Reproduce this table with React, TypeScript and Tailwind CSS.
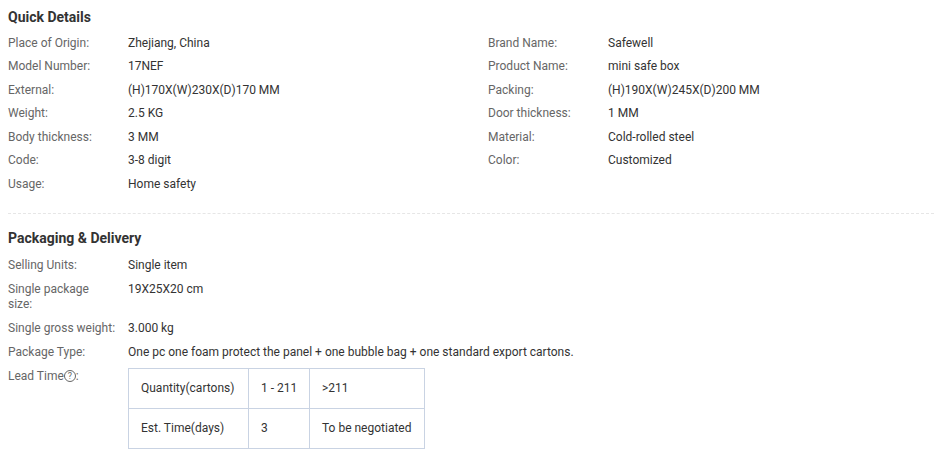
import React from "react";

const quickLeft: [string, string][] = [
  ["Place of Origin:", "Zhejiang, China"],
  ["Model Number:", "17NEF"],
  ["External:", "(H)170X(W)230X(D)170 MM"],
  ["Weight:", "2.5 KG"],
  ["Body thickness:", "3 MM"],
  ["Code:", "3-8 digit"],
  ["Usage:", "Home safety"],
];
const quickRight: [string, string][] = [
  ["Brand Name:", "Safewell"],
  ["Product Name:", "mini safe box"],
  ["Packing:", "(H)190X(W)245X(D)200 MM"],
  ["Door thickness:", "1 MM"],
  ["Material:", "Cold-rolled steel"],
  ["Color:", "Customized"],
];

function Row({ label, value }: { label: React.ReactNode; value: React.ReactNode }) {
  return (
    <div className="flex leading-[15px]">
      <div className="w-[120px] shrink-0 pr-1 text-[#666]">{label}</div>
      <div className="text-[#333]">{value}</div>
    </div>
  );
}

export default function App() {
  const grid: React.ReactNode[] = [];
  for (let i = 0; i < 7; i++) {
    const l = quickLeft[i];
    const r = quickRight[i];
    grid.push(<Row key={"l" + i} label={l[0]} value={l[1]} />);
    grid.push(r ? <Row key={"r" + i} label={r[0]} value={r[1]} /> : <div key={"r" + i} />);
  }
  return (
    <div
      className="w-[934px] h-[461px] bg-white pl-2 text-[12px]"
      style={{ fontFamily: "Roboto, 'Liberation Sans', sans-serif" }}
    >
      <div className="pt-[7px]">
        <div className="text-[14px] font-bold leading-[20px] text-[#333]">Quick Details</div>
        <div className="mt-[8.5px] grid grid-cols-[480px_1fr] gap-y-[8.5px]">{grid}</div>
      </div>
      <div className="mt-[21.5px] border-t border-dashed border-[#e6e6e6]" />
      <div className="pt-[14px]">
        <div className="text-[14px] font-bold leading-[20px] text-[#333]">Packaging &amp; Delivery</div>
        <div className="mt-[9.5px] flex flex-col gap-y-[9px]">
          <Row label="Selling Units:" value="Single item" />
          <Row
            label={
              <>
                Single package
                <br />
                size:
              </>
            }
            value="19X25X20 cm"
          />
          <Row label="Single gross weight:" value="3.000 kg" />
          <Row label="Package Type:" value="One pc one foam protect the panel + one bubble bag + one standard export cartons." />
          <div className="flex leading-[15px]">
            <div className="w-[120px] shrink-0 text-[#666] flex items-start">
              Lead Time
              <span className="mt-[1.5px] inline-flex h-[12px] w-[12px] items-center justify-center rounded-full border border-[#666] text-[9px] leading-none text-[#666]">
                ?
              </span>
              :
            </div>
            <table className="border-collapse text-[#333] leading-[15px] -mt-[0.5px]">
              <tbody>
                <tr className="h-[40px]">
                  <td className="w-[120px] border border-[#c9d3e3] pl-3">Quantity(cartons)</td>
                  <td className="w-[61px] border border-[#c9d3e3] pl-3">1 - 211</td>
                  <td className="w-[115px] border border-[#c9d3e3] pl-3">&gt;211</td>
                </tr>
                <tr className="h-[40px]">
                  <td className="border border-[#c9d3e3] pl-3">Est. Time(days)</td>
                  <td className="border border-[#c9d3e3] pl-3">3</td>
                  <td className="border border-[#c9d3e3] pl-3">To be negotiated</td>
                </tr>
              </tbody>
            </table>
          </div>
        </div>
      </div>
    </div>
  );
}
